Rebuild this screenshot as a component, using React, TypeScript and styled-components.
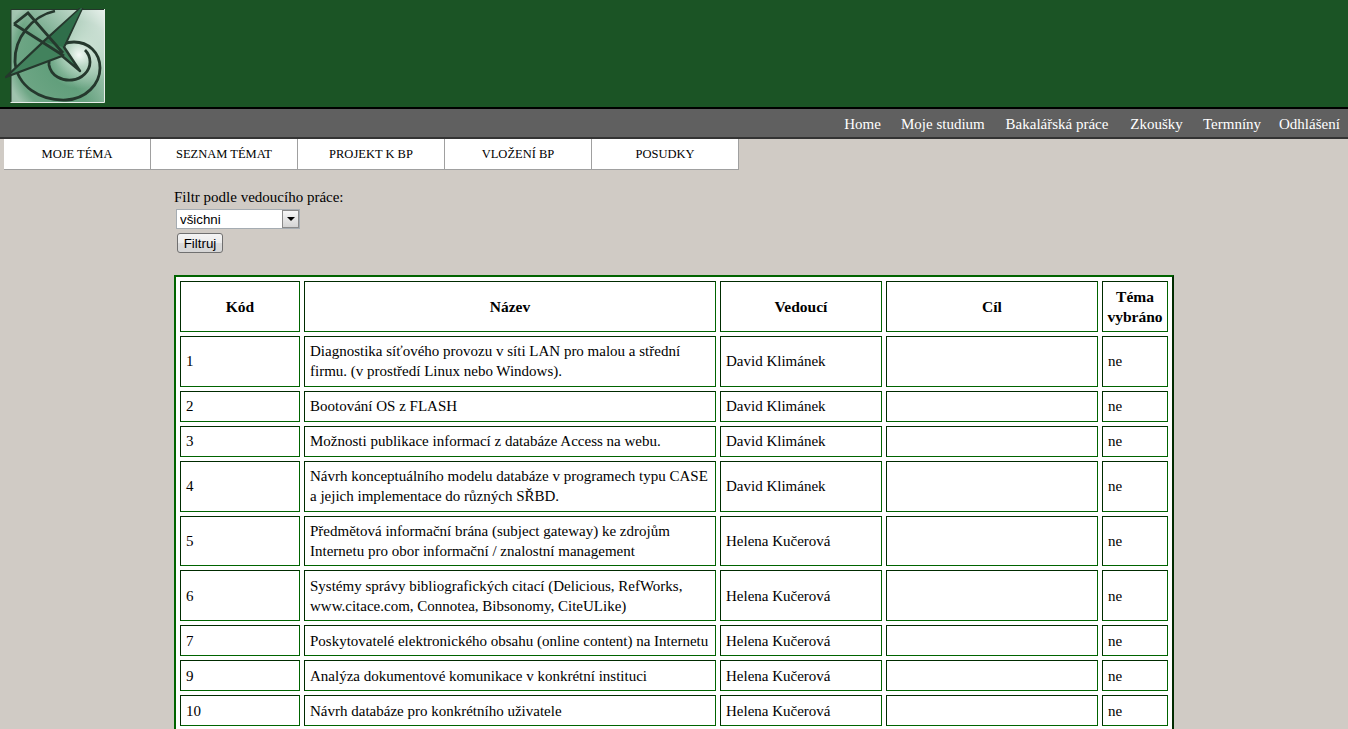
import React from "react";
import styled, { createGlobalStyle } from "styled-components";

const Global = createGlobalStyle`
  html, body { margin: 0; padding: 0; height: 729px; overflow: hidden; background: #d0cbc5; }
  body { font-family: "Liberation Serif", "Times New Roman", serif; color: #000; }
`;
const Header = styled.header`
  height: 99px;
  background: #1b5425;
  border-bottom: 2px solid #000;
  padding: 8px 0 0 5px;
`;
const LogoSvg = styled.svg`
  display: block;
`;
const MainNav = styled.nav`
  height: 26px;
  padding-top: 2px;
  background: #606060;
  border-bottom: 2px solid #333;
  display: flex;
  justify-content: flex-end;
  align-items: center;
  gap: 20px;
  padding-right: 9px;
`;
const NavLink = styled.a<{ $w: number }>`
  color: #fff;
  font-size: 15px;
  text-decoration: none;
  width: ${p => p.$w}px;
  white-space: nowrap;
  text-align: center;
`;
const Tabs = styled.div`
  display: flex;
  padding-left: 4px;
`;
const Tab = styled.a`
  width: 147px;
  height: 31px;
  box-sizing: border-box;
  background: #fff;
  border-bottom: 1px solid #a0a0a0;
  border-right: 1px solid #a0a0a0;
  display: flex;
  align-items: center;
  justify-content: center;
  font-size: 12.5px;
  color: #000;
`;
const Content = styled.main`
  padding: 17px 0 0 174px;
  width: 1000px;
`;
const FilterLabel = styled.div`
  font-size: 15px;
  line-height: 20px;
`;
const SelectBox = styled.div`
  position: relative;
  margin: 2px 0 0 2px;
  width: 124px;
  height: 20px;
`;
const NativeSelect = styled.select`
  appearance: none;
  display: block;
  width: 124px;
  height: 20px;
  box-sizing: border-box;
  border: 1px solid #a5acb2;
  background: #fff;
  padding: 0 0 0 3px;
  font: 13.33px "Liberation Sans", Arial, sans-serif;
  color: #000;
  border-radius: 0;
`;
const SelectArrow = styled.span`
  position: absolute;
  right: 1px;
  top: 1px;
  width: 17px;
  height: 18px;
  box-sizing: border-box;
  border: 1px solid #8a8a8a;
  background: linear-gradient(#f6f6f6, #d4d4d4);
  display: flex;
  align-items: center;
  justify-content: center;
  &::after {
    content: "";
    border-left: 4px solid transparent;
    border-right: 4px solid transparent;
    border-top: 4px solid #000;
  }
`;
const FilterButton = styled.button`
  display: block;
  margin: 4px 0 0 3px;
  width: 46px;
  height: 20px;
  box-sizing: border-box;
  padding: 0;
  border: 1px solid #707070;
  border-radius: 3px;
  background: linear-gradient(#f4f4f4 0%, #ececec 50%, #dcdcdc 51%, #d6d6d6 100%);
  font: 13.33px "Liberation Sans", Arial, sans-serif;
  color: #000;
`;
const Table = styled.table`
  margin-top: 22px;
  width: 1000px;
  table-layout: fixed;
  border-collapse: separate;
  border-spacing: 4px;
  border-width: 2px;
  border-style: solid;
  border-color: #006400 #002b00 #002b00 #006400;
  background: #fff;
  font-size: 15px;
`;
const HeadCell = styled.th`
  border-width: 1px;
  border-style: solid;
  border-color: #002b00 #006400 #006400 #002b00;
  height: 47.91px;
  padding: 1px 4px 0;
  box-sizing: content-box;
  font-size: 15.5px;
  line-height: 20px;
  text-align: center;
`;
const Cell = styled.td<{ $tall: boolean }>`
  border-width: 1px;
  border-style: solid;
  border-color: #002b00 #006400 #006400 #002b00;
  padding: 0 5px;
  height: ${p => (p.$tall ? 48.91 : 28.91)}px;
  box-sizing: content-box;
  line-height: 20px;
  vertical-align: middle;
`;

const rows = [
  ["1", "Diagnostika síťového provozu v síti LAN pro malou a střední firmu. (v prostředí Linux nebo Windows).", "David Klimánek", true],
  ["2", "Bootování OS z FLASH", "David Klimánek", false],
  ["3", "Možnosti publikace informací z databáze Access na webu.", "David Klimánek", false],
  ["4", "Návrh konceptuálního modelu databáze v programech typu CASE a jejich implementace do různých SŘBD.", "David Klimánek", true],
  ["5", "Předmětová informační brána (subject gateway) ke zdrojům Internetu pro obor informační / znalostní management", "Helena Kučerová", true],
  ["6", "Systémy správy bibliografických citací (Delicious, RefWorks, www.citace.com, Connotea, Bibsonomy, CiteULike)", "Helena Kučerová", true],
  ["7", "Poskytovatelé elektronického obsahu (online content) na Internetu", "Helena Kučerová", false],
  ["9", "Analýza dokumentové komunikace v konkrétní instituci", "Helena Kučerová", false],
  ["10", "Návrh databáze pro konkrétního uživatele", "Helena Kučerová", false],
] as const;

const navItems: [string, number][] = [
  ["Home", 37], ["Moje studium", 83], ["Bakalářská práce", 106], ["Zkoušky", 53], ["Termníny", 56], ["Odhlášení", 60],
];

function Logo() {
  return (
    <LogoSvg width="102" height="100" viewBox="5 8 102 100">
      <defs>
        <radialGradient id="lg" gradientUnits="userSpaceOnUse" cx="79" cy="55" r="75">
          <stop offset="0" stopColor="#eef6f1" />
          <stop offset="0.16" stopColor="#a3cab2" />
          <stop offset="0.45" stopColor="#629f7c" />
          <stop offset="0.85" stopColor="#6ea685" />
          <stop offset="1" stopColor="#a0c3ae" />
        </radialGradient>
        <linearGradient id="tr" x1="0.4" y1="0.5" x2="1" y2="0">
          <stop offset="0" stopColor="#fff" stopOpacity="0" />
          <stop offset="1" stopColor="#fff" stopOpacity="0.85" />
        </linearGradient>
      </defs>
      <rect x="11" y="9" width="93" height="93" fill="url(#lg)" />
      <rect x="11" y="9" width="93" height="93" fill="url(#tr)" />
      <path d="M11 102V9.500H104" fill="none" stroke="#24372b" strokeWidth="1" />
      <path d="M10.500 102.500H104.500V9" fill="none" stroke="#e8eeea" strokeWidth="1" />
      <path d="M55 11 C32 16 14 38 15 62 C17 86 40 101 66 100 C86 99 100 84 100 68 C100 52 88 42 74 42 C58 42 48 54 49 65 C51 76 62 81 72 80 C82 79 90 71 90 62 C90 57 88 53 85 50" fill="none" stroke="#25382d" strokeWidth="2.800" />
      <path d="M83 6 L64 47 L80 71 L62 56 L6 77 L42 43 Z" fill="#42825d" stroke="#25382d" strokeWidth="2.400" strokeLinejoin="round" />
      <path d="M83 6 L63 47 L45 42 Z" fill="#2f6e4a" />
      <path d="M14 24 L28 13 L63 53 M14 24 L64 56" fill="none" stroke="#25382d" strokeWidth="2.800" />
    </LogoSvg>
  );
}

export default function App() {
  return (
    <>
      <Global />
      <Header><Logo /></Header>
      <MainNav>
        {navItems.map(([t, w]) => (
          <NavLink key={t} $w={w}>{t}</NavLink>
        ))}
      </MainNav>
      <Tabs>
        {["MOJE TÉMA", "SEZNAM TÉMAT", "PROJEKT K BP", "VLOŽENÍ BP", "POSUDKY"].map(t => (
          <Tab key={t}>{t}</Tab>
        ))}
      </Tabs>
      <Content>
        <FilterLabel>Filtr podle vedoucího práce:</FilterLabel>
        <SelectBox>
          <NativeSelect defaultValue="všichni"><option>všichni</option></NativeSelect>
          <SelectArrow />
        </SelectBox>
        <FilterButton>Filtruj</FilterButton>
        <Table>
          <colgroup>
            <col style={{ width: 120 }} />
            <col style={{ width: 412 }} />
            <col style={{ width: 162 }} />
            <col style={{ width: 212 }} />
            <col style={{ width: 66 }} />
          </colgroup>
          <thead>
            <tr>
              <HeadCell>Kód</HeadCell>
              <HeadCell>Název</HeadCell>
              <HeadCell>Vedoucí</HeadCell>
              <HeadCell>Cíl</HeadCell>
              <HeadCell>Téma vybráno</HeadCell>
            </tr>
          </thead>
          <tbody>
            {rows.map(([code, name, lead, tall]) => (
              <tr key={code}>
                <Cell $tall={tall}>{code}</Cell>
                <Cell $tall={tall}>{name}</Cell>
                <Cell $tall={tall}>{lead}</Cell>
                <Cell $tall={tall} />
                <Cell $tall={tall}>ne</Cell>
              </tr>
            ))}
          </tbody>
        </Table>
      </Content>
    </>
  );
}
